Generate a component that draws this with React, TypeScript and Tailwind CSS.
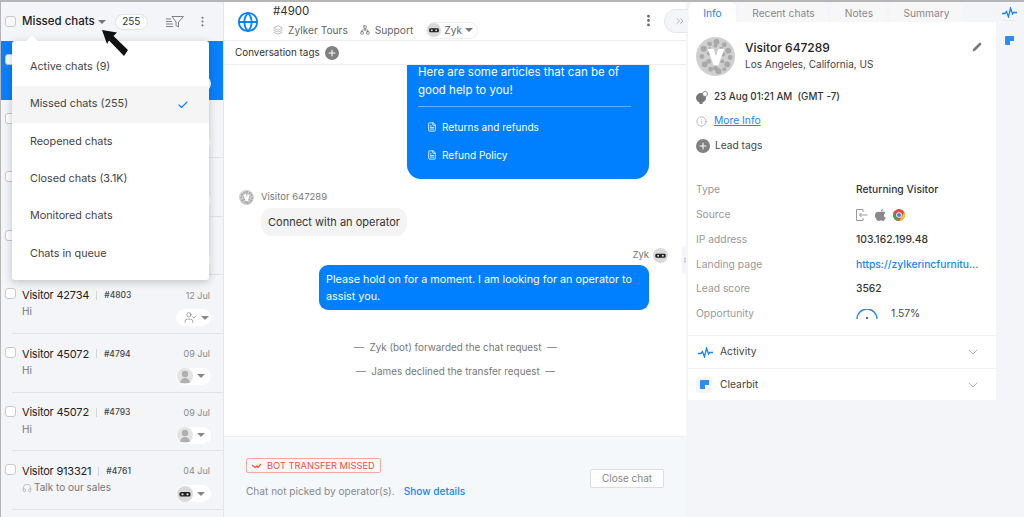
import React from 'react';
import { Check, ChevronDown, ChevronsRight, Ellipsis, EllipsisVertical, FileText, Globe, Layers, Network, Pencil, Plus, UserCheck, Info, Headphones } from 'lucide-react';

const font = "font-['Inter','Noto_Sans',sans-serif]";

const Caret = ({ className = 'border-t-[#777]' }: { className?: string }) => (
  <span className={`inline-block w-0 h-0 border-x-[4px] border-x-transparent border-t-[4px] ${className}`} />
);

const BotFace = ({ size = 16 }: { size?: number }) => (
  <svg width={size} height={size} viewBox="0 0 16 16">
    <circle cx="8" cy="8" r="8" fill="#d9d9d9" />
    <rect x="2.5" y="6" width="11" height="4.5" rx="1.5" fill="#222" />
    <circle cx="5.5" cy="8.3" r="1.1" fill="#ddd" />
    <circle cx="10.5" cy="8.3" r="1.1" fill="#ddd" />
  </svg>
);

const UserFace = () => (
  <svg width="16" height="16" viewBox="0 0 16 16">
    <circle cx="8" cy="8" r="8" fill="#e4e4e4" />
    <circle cx="8" cy="6" r="3.2" fill="#b0b0b0" />
    <path d="M3 15c.5-3.5 2.5-5 5-5s4.500 1.500 5 5z" fill="#b0b0b0" />
  </svg>
);

const VisitorAvatar = ({ size }: { size: number }) => {
  const dots = [
    [8, 12, 3], [14, 7, 2.5], [21, 5, 3], [29, 8, 2.500], [33, 14, 3], [6, 20, 2.500], [35, 21, 2.500],
    [9, 28, 3], [32, 28, 3], [15, 33, 2.500], [23, 35, 3], [29, 33, 2], [13, 17, 2], [28, 18, 2],
    [13, 25, 2.500], [27, 25, 2], [20, 32, 2.500], [20, 9, 2], [26, 12, 2], [14, 12, 1.500],
  ];
  return (
    <svg width={size} height={size} viewBox="0 0 40 40" className="shrink-0">
      <circle cx="20" cy="20" r="20" fill="#cfcfcf" />
      {dots.map(([x, y, r], i) => (
        <circle key={i} cx={x} cy={y} r={r} fill="#a9a9a9" />
      ))}
      <path d="M12 12h6l2.500 8 2.500-8h6l-6 17h-5z" fill="#fff" />
    </svg>
  );
};

const ActivityIcon = () => (
  <svg width="15" height="11" viewBox="0 0 15 11" fill="none" stroke="#1a84f0" strokeWidth="1.300">
    <path d="M0 6.500h3l1.500-2 2 5.500 2-9 2 6 1-1.500H15" />
  </svg>
);

const ClearbitIcon = () => (
  <svg width="9" height="9" viewBox="0 0 9 9">
    <path d="M1 0h8v5H5v4H1a1 1 0 0 1-1-1V1a1 1 0 0 1 1-1z" fill="#2e8df2" />
  </svg>
);

type Chat = {
  name: string;
  id: string;
  date: string;
  msg: string;
  kind: 'user' | 'bot' | 'assign';
  headset?: boolean;
  active?: boolean;
  covered?: boolean;
};

const chats: Chat[] = [
  { name: '', id: 'a', date: '', msg: '', kind: 'bot', active: true, covered: true },
  { name: '', id: 'b', date: '', msg: '', kind: 'assign', covered: true },
  { name: '', id: 'c', date: '', msg: '', kind: 'assign', covered: true },
  { name: '', id: 'd', date: '', msg: '', kind: 'assign', covered: true },
  { name: 'Visitor 42734', id: '#4803', date: '12 Jul', msg: 'Hi', kind: 'assign' },
  { name: 'Visitor 45072', id: '#4794', date: '09 Jul', msg: 'Hi', kind: 'user' },
  { name: 'Visitor 45072', id: '#4793', date: '09 Jul', msg: 'Hi', kind: 'user' },
  { name: 'Visitor 913321', id: '#4761', date: '04 Jul', msg: 'Talk to our sales', kind: 'bot', headset: true },
];

const menu = ['Active chats (9)', 'Missed chats (255)', 'Reopened chats', 'Closed chats (3.1K)', 'Monitored chats', 'Chats in queue'];

const details = [
  ['Type', 'Returning Visitor'],
  ['IP address', '103.162.199.48'],
  ['Landing page', 'https://zylkerincfurnitu...'],
  ['Lead score', '3562'],
];

const ChatRow = ({ chat }: { chat: Chat }) => (
  <div className={`relative h-[58.600px] shrink-0 pl-[21px] pr-[13px] pt-[12px] ${chat.active ? 'bg-[#0a80ff]' : ''}`}>
    <span className="absolute left-[4px] top-[13px] w-[11px] h-[11px] rounded-[3px] border border-[#c9c9c9] bg-white" />
    {!chat.covered && (
      <>
        <div className="flex items-center h-[16px]">
          <span className="text-[11px] tracking-[-0.2px] text-[#222]">{chat.name}</span>
          <span className="mx-[7px] h-[9px] w-px bg-[#d5d5d5]" />
          <span className="text-[8.500px] font-medium text-[#444]">{chat.id}</span>
          <span className="ml-auto text-[9px] text-[#8a8a8a]">{chat.date}</span>
        </div>
        <div className="flex items-center gap-[2px] mt-[1px] text-[10px] text-[#777]">
          {chat.headset && <Headphones size={10} strokeWidth={1.300} className="text-[#999]" />}
          {chat.msg}
        </div>
      </>
    )}
    <div className="absolute right-[12px] top-[34px] w-[35px] h-[17px] rounded-full bg-white flex items-center gap-[4px] pl-[1px]">
      {chat.kind === 'user' && <UserFace />}
      {chat.kind === 'bot' && <BotFace />}
      {chat.kind === 'assign' && <UserCheck size={13} strokeWidth={1.200} className="text-[#777] ml-[7px]" />}
      <Caret className="border-t-[#888]" />
    </div>
    {!chat.active && <span className="absolute left-[11px] right-0 bottom-0 h-px bg-[#e0e2e6]" />}
  </div>
);

const ChatList = () => (
  <aside className="relative w-[223px] shrink-0 bg-[#f3f5f9] flex flex-col border-r border-[#e3e5e9]">
    <div className="h-[39px] shrink-0 flex items-center pl-[4px]">
      <span className="w-[11px] h-[11px] rounded-[3px] border border-[#c9c9c9] bg-[#f7f7f7]" />
      <span className="ml-[6px] text-[11.500px] font-medium text-[#222]">Missed chats</span>
      <span className="ml-[3px] flex"><Caret /></span>
      <span className="ml-[9px] w-[33px] h-[16px] rounded-full bg-white border border-[#e3e3e3] text-[10px] text-[#333] flex items-center justify-center">255</span>
      <svg width="18" height="12" viewBox="0 0 18 12" fill="none" stroke="#777" strokeWidth="0.900" className="ml-[18px]">
        <path d="M6 .5h11.500L12.500 6v5l-2.500-1.500V6z" />
        <path d="M0 3h5M0 5.500h6M0 8h7M0 10.500h7" />
      </svg>
      <EllipsisVertical size={13} className="ml-[12px] text-[#777]" />
    </div>
    {chats.map((c) => (
      <ChatRow key={c.id} chat={c} />
    ))}

    {/* status dropdown */}
    <div className="absolute left-[11px] top-[39px] w-[197px] h-[239px] bg-white rounded-[3px] shadow-[0_2px_8px_rgba(0,0,0,0.22)] pt-[7.600px]">
      <span className="absolute left-[16px] -top-[4px] w-[8px] h-[8px] bg-white rotate-45" />
      {menu.map((m, i) => (
        <div key={m} className={`h-[37.300px] pl-[18px] pr-[20px] flex items-center justify-between text-[10.800px] text-[#444] ${i === 1 ? 'bg-[#f5f5f5]' : ''}`}>
          {m}
          {i === 1 && <Check size={12} strokeWidth={2.200} className="text-[#0a80ff]" />}
        </div>
      ))}
    </div>

    {/* pointer arrow on the screenshot */}
    <svg width="28" height="28" viewBox="0 0 28 28" className="absolute left-[101px] top-[28px]">
      <path d="M0 0l15 2.500-3.500 3.500L26 20l-4 6L7 10.500 5 14z" fill="#111" />
    </svg>
  </aside>
);

const Conversation = () => (
  <main className="relative w-[462px] shrink-0 bg-white flex flex-col">
    <div className="h-[39px] shrink-0 flex items-center pl-[13px] pt-[2px] border-b border-[#eeeeee]">
      <Globe size={22} strokeWidth={2} className="text-[#0a80ff]" />
      <div className="ml-[14px]">
        <div className="text-[11.500px] text-[#333] leading-[14px] -mt-[2px]">#4900</div>
        <div className="flex items-center mt-[4px] text-[10.200px] text-[#666] leading-[14px]">
          <Layers size={10} strokeWidth={1.300} className="text-[#888]" />
          <span className="ml-[5px]">Zylker Tours</span>
          <Network size={10} strokeWidth={1.700} className="ml-[12px] text-[#666]" />
          <span className="ml-[5px]">Support</span>
          <span className="ml-[13px] flex items-center gap-[3px] h-[17px] rounded-full border border-[#eeeeee] pr-[4px]">
            <BotFace size={14} /> Zyk <Caret />
          </span>
        </div>
      </div>
      <EllipsisVertical size={15} strokeWidth={2.500} className="absolute left-[417px] top-[11px] text-[#666]" />
    </div>
    <div className="h-[24px] shrink-0 flex items-center pl-[11px] gap-[5px] text-[9.900px] text-[#333] border-b border-[#eeeeee]">
      Conversation tags
      <span className="w-[14px] h-[14px] rounded-full bg-[#808080] flex items-center justify-center">
        <Plus size={10} strokeWidth={2.500} className="text-white" />
      </span>
    </div>

    <div className="flex-1 min-h-0 overflow-hidden flex flex-col pl-[15px] pr-[37px]">
      <div className="self-end w-[242px] h-[114px] shrink-0 rounded-b-[14px] bg-[#0080ff] text-white px-[11px] text-[11.500px] leading-[18px]">
        <p className="-mt-[2px]">Here are some articles that can be of good help to you!</p>
        <div className="mt-[7px] mb-[11px] mr-[7px] h-px bg-[#5fb0ff]" />
        <div className="flex items-center gap-[5px] pl-[9px] text-[10.100px]"><FileText size={10} />Returns and refunds</div>
        <div className="flex items-center gap-[5px] pl-[9px] mt-[10px] text-[10.100px]"><FileText size={10} />Refund Policy</div>
      </div>

      <div className="flex items-center gap-[7px] mt-[11px] text-[9.500px] text-[#777]">
        <VisitorAvatar size={15} /> Visitor 647289
      </div>
      <div className="self-start ml-[22px] mt-[3px] h-[28px] rounded-[11px] bg-[#f4f4f4] px-[7px] flex items-center text-[11px] text-[#333]">
        Connect with an operator
      </div>

      <div className="self-end flex items-center gap-[4px] -mr-[19px] mt-[12px] text-[9.500px] text-[#777]">
        Zyk <BotFace size={15} />
      </div>
      <div className="self-end w-[330px] h-[45px] mt-[2px] rounded-[9px] bg-[#0080ff] text-white px-[7px] pt-[6px] text-[10.800px] leading-[17px]">
        Please hold on for a moment. I am looking for an operator to assist you.
      </div>

      <div className="mt-[31px] text-center text-[9.900px] text-[#777] leading-[12px] pl-[23px]">—&nbsp;&nbsp;Zyk (bot) forwarded the chat request&nbsp;&nbsp;—</div>
      <div className="mt-[12px] text-center text-[9.900px] text-[#777] leading-[12px] pl-[23px]">—&nbsp;&nbsp;James declined the transfer request&nbsp;&nbsp;—</div>
    </div>

    <div className="h-[81px] shrink-0 bg-[#f5f8fb] border-t border-[#eceeef] pl-[22px] pr-[22px] flex items-start justify-between">
      <div className="pt-[21px]">
        <span className="flex w-fit items-center gap-[6px] h-[15px] px-[5px] rounded-[2px] border border-[#f9a79a] text-[9.300px] text-[#f0533d]">
          <ActivityMissed /> BOT TRANSFER MISSED
        </span>
        <div className="mt-[11px] text-[10.100px] text-[#888] leading-[14px]">
          Chat not picked by operator(s).<span className="ml-[9px] font-medium text-[#1a84f0]">Show details</span>
        </div>
      </div>
      <span className="mt-[32px] w-[74px] h-[19px] rounded-[2px] border border-[#dddddd] bg-white text-[10px] text-[#888] flex items-center justify-center">Close chat</span>
    </div>
  </main>
);

const ActivityMissed = () => (
  <svg width="9" height="6" viewBox="0 0 9 6" fill="none" stroke="#f0533d" strokeWidth="1.300">
    <path d="M0 2l3 2.500L5 3l1 1.500L9 1" />
  </svg>
);

const InfoPanel = () => (
  <section className="relative w-[310px] shrink-0 bg-[#f3f5f9] flex flex-col">
    <div className="h-[20px] shrink-0 flex gap-[3px] pl-[3px] text-[10.200px] text-[#888]">
      <span className="w-[47px] pt-[4px] bg-white text-[#1a84f0] rounded-t-[6px] flex items-center justify-center">Info</span>
      <span className="w-[89px] pt-[4px] bg-[#f7f7f8] rounded-t-[6px] flex items-center justify-center">Recent chats</span>
      <span className="w-[56px] pt-[4px] bg-[#f7f7f8] rounded-t-[6px] flex items-center justify-center">Notes</span>
      <span className="w-[73px] pt-[4px] bg-[#f7f7f8] rounded-t-[6px] flex items-center justify-center">Summary</span>
    </div>
    <div className="h-[378px] shrink-0 bg-white ml-[2px] flex flex-col">
      <div className="relative h-[63px] shrink-0 flex pl-[8px] pt-[15px] gap-[10px]">
        <VisitorAvatar size={39} />
        <div className="pt-[3px]">
          <div className="text-[12px] font-medium text-[#222] leading-[16px]">Visitor 647289</div>
          <div className="text-[10px] text-[#444] leading-[14px] mt-[1px]">Los Angeles, California, US</div>
        </div>
        <Pencil size={10} fill="#777" strokeWidth={1} className="absolute right-[14px] top-[20px] text-[#777]" />
      </div>
      <div className="flex items-center gap-[6px] pl-[8px] mt-[5px] h-[14px] text-[9.800px] font-medium text-[#333]">
        <svg width="12" height="13" viewBox="0 0 12 13" fill="#777">
          <path d="M5 2a5 5 0 0 1 5 5c0 2.500-2.500 4-3.500 4.500V13h-3v-1.500C2.500 11 0 9.500 0 7a5 5 0 0 1 5-5z" />
          <circle cx="9" cy="3" r="2.500" fill="#fff" stroke="#777" strokeWidth="0.800" />
        </svg>
        <span>23 Aug 01:21 AM&nbsp;&nbsp;(GMT -7)</span>
      </div>
      <div className="flex items-center gap-[7px] pl-[8px] mt-[10px] h-[14px] text-[10.300px] text-[#1a84f0] underline">
        <Info size={11} strokeWidth={1.200} className="text-[#888]" />
        <span>More Info</span>
      </div>
      <div className="flex items-center gap-[5px] pl-[8px] mt-[10px] h-[15px] text-[10.200px] text-[#444]">
        <span className="w-[14px] h-[14px] rounded-full bg-[#808080] flex items-center justify-center">
          <Plus size={10} strokeWidth={2.500} className="text-white" />
        </span>
        Lead tags
      </div>

      <div className="mt-[24.500px] pl-[8px] text-[10.300px] flex-1">
        <Row label={details[0][0]} value={details[0][1]} />
        <div className="flex h-[24.800px] items-center">
          <span className="w-[160px] text-[#999]">Source</span>
          <span className="flex items-center gap-[7px]">
            <svg width="12" height="12" viewBox="0 0 12 12" fill="none" stroke="#999" strokeWidth="1">
              <path d="M7 3V.5H.5v11H7V9M11.500 6H3.500M5.500 4l-2 2 2 2" />
            </svg>
            <AppleMark />
            <ChromeMark />
          </span>
        </div>
        <Row label={details[1][0]} value={details[1][1]} />
        <Row label={details[2][0]} value={details[2][1]} link />
        <Row label={details[3][0]} value={details[3][1]} />
        <div className="flex h-[24.800px] items-center">
          <span className="w-[160px] text-[#999]">Opportunity</span>
          <svg width="22" height="11" viewBox="0 0 22 11" fill="none" className="mt-[2px]">
            <path d="M1 10a10 10 0 0 1 20 0" stroke="#1a84f0" strokeWidth="1.300" />
            <circle cx="11" cy="9" r="1" fill="#333" />
          </svg>
          <span className="ml-[13px] text-[#444]">1.57%</span>
        </div>
      </div>

      <div className="h-[33px] shrink-0 border-t border-[#f2f2f2] flex items-center pl-[10px] pr-[15px] text-[10.300px] text-[#444]">
        <ActivityIcon />
        <span className="ml-[7px]">Activity</span>
        <ChevronDown size={16} strokeWidth={1} className="ml-auto text-[#888]" />
      </div>
      <div className="h-[32px] shrink-0 border-t border-[#f2f2f2] flex items-center pl-[8px] pr-[15px] text-[10.300px] text-[#444]">
        <span className="w-[16px] h-[16px] rounded-[3px] bg-[#f4f6f9] flex items-center justify-center"><ClearbitIcon /></span>
        <span className="ml-[8px]">Clearbit</span>
        <ChevronDown size={16} strokeWidth={1} className="ml-auto text-[#888]" />
      </div>
    </div>

    <span className="absolute -left-[22px] top-[7px] w-[24px] h-[24px] rounded-l-full bg-[#f3f5f9] border border-r-0 border-[#e6e8ec] flex items-center justify-center">
      <ChevronsRight size={12} strokeWidth={1} className="text-[#777] ml-[6px]" />
    </span>
    <span className="absolute -left-[4px] top-[244px] w-[6px] h-[28px] rounded-l-[3px] bg-[#f3f5f9] flex items-center justify-center">
      <Ellipsis size={6} className="text-[#999] rotate-90" />
    </span>
  </section>
);

const Row = ({ label, value, link }: { label: string; value: string; link?: boolean }) => (
  <div className="flex h-[24.800px] items-center">
    <span className="w-[160px] text-[#999]">{label}</span>
    <span className={link ? 'font-medium text-[#1a84f0]' : 'font-medium text-[#333]'}>{value}</span>
  </div>
);

const AppleMark = () => (
  <svg width="11" height="12" viewBox="0 0 11 12">
    <path d="M8 0c0 1.500-1 2.500-2.300 2.600C5.600 1.300 6.700.2 8 0zM5.600 3.100c.7 0 1.400-.5 2.400-.5.9 0 1.800.5 2.300 1.300-2 1.100-1.700 4 .4 4.800-.5 1.300-1.500 3.200-2.600 3.200-.8 0-1.100-.5-2.100-.5s-1.400.5-2.100.5C2.300 12 0 9.200 0 6.500 0 4.100 1.500 2.700 3 2.700c1 0 1.900.4 2.600.4z" fill="#8a8a8a" />
  </svg>
);

const ChromeMark = () => (
  <svg width="12" height="12" viewBox="0 0 12 12">
    <circle cx="6" cy="6" r="6" fill="#e24a3b" />
    <path d="M6 12A6 6 0 0 1 .8 3l2.800 5L6 12z" fill="#3aa757" />
    <path d="M6 12l3-5 2.200-4A6 6 0 0 1 6 12z" fill="#f7c52c" />
    <circle cx="6" cy="6" r="2.800" fill="#fff" />
    <circle cx="6" cy="6" r="2.100" fill="#3f84f0" />
  </svg>
);

const Rail = () => (
  <nav className="flex-1 bg-[#f3f5f9] flex flex-col items-center pt-[4.500px] pr-[2px]">
    <ActivityIcon />
    <span className="mt-[2px] mb-[15px] w-[13px] h-px bg-[#e6e8ec]" />
    <ClearbitIcon />
  </nav>
);

export default function App() {
  return (
    <div className={`${font} w-[1024px] h-[517px] overflow-hidden flex bg-white border-t-2 border-l border-[#b5b5b5]`}>
      <ChatList />
      <Conversation />
      <InfoPanel />
      <Rail />
    </div>
  );
}
